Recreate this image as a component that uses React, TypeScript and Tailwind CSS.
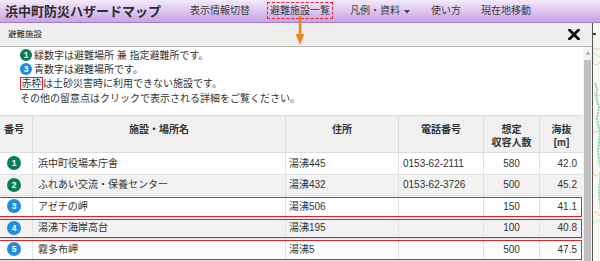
import React from "react";

const font = "font-['Liberation_Sans','Noto_Sans_CJK_JP',sans-serif]";

type Row = {
  no: number;
  color: "green" | "blue";
  name: string;
  addr: string;
  tel: string;
  cap: string;
  alt: string;
  red?: boolean;
};

const rows: Row[] = [
  { no: 1, color: "green", name: "浜中町役場本庁舎", addr: "湯沸445", tel: "0153-62-2111", cap: "580", alt: "42.0" },
  { no: 2, color: "green", name: "ふれあい交流・保養センター", addr: "湯沸432", tel: "0153-62-3726", cap: "500", alt: "45.2" },
  { no: 3, color: "blue", name: "アゼチの岬", addr: "湯沸506", tel: "", cap: "150", alt: "41.1", red: true },
  { no: 4, color: "blue", name: "湯沸下海岸高台", addr: "湯沸195", tel: "", cap: "100", alt: "40.8", red: true },
  { no: 5, color: "blue", name: "霧多布岬", addr: "湯沸5", tel: "", cap: "500", alt: "47.5", red: true },
];

const Badge = ({ n, color, size }: { n: number; color: "green" | "blue"; size: string }) => (
  <span
    className={`${size} ${color === "green" ? "bg-[#0b7d56]" : "bg-[#1f8de0]"} inline-flex shrink-0 items-center justify-center rounded-full text-[8.5px] font-bold leading-none text-white`}
  >
    {n}
  </span>
);

const navItems = ["表示情報切替", "避難施設一覧", "凡例・資料", "使い方", "現在地移動"];

export default function App() {
  return (
    <div className={`${font} relative h-[261px] w-[600px] overflow-hidden bg-white text-[#333]`}>
      {/* top bar */}
      <header className="flex h-[23px] items-center border-b border-[#a67dc7] bg-gradient-to-b from-[#f3eafa] to-[#c9a3e4] pl-[5px]">
        <h1 className="text-[13px] font-bold leading-none text-[#2c2c2c]">浜中町防災ハザードマップ</h1>
        <nav className="ml-[29px] flex items-center gap-[20px] text-[10px] leading-none text-[#3a3a3a]">
          {navItems.map((item) => (
            <span key={item} className="relative flex items-center">
              {item}
              {item === "凡例・資料" && (
                <svg width="8" height="5" viewBox="0 0 8 5" className="ml-[3px]">
                  <path d="M1 1h6L4 4.5z" fill="#444" />
                </svg>
              )}
              {item === "避難施設一覧" && (
                <span className="absolute -left-[3px] -right-[3px] -top-[4px] -bottom-[3px] border-[1.5px] border-dashed border-[#e5202a]" />
              )}
            </span>
          ))}
        </nav>
      </header>

      {/* orange arrow from the menu to the dialog */}
      <svg className="absolute left-[294px] top-[16px]" width="12" height="31" viewBox="0 0 12 31">
        <rect x="4.8" y="0" width="2.6" height="19" fill="#ef8420" />
        <path d="M1.5 18h9L6 29z" fill="#ef8420" />
      </svg>

      <div className="flex h-[238px]">
        {/* dialog */}
        <div className="flex w-[593px] flex-col border-r border-[#555]">
          <div className="flex h-[24px] shrink-0 items-center justify-between border-b border-[#b4b4b4] bg-[#efefef] pl-[8px] pr-[12px]">
            <span className="text-[8.5px] leading-none text-[#222]">避難施設</span>
            <svg width="12" height="11" viewBox="0 0 12 11">
              <path d="M1.5 1l9 9M10.5 1l-9 9" stroke="#111" strokeWidth="2.8" strokeLinecap="square" />
            </svg>
          </div>

          <div className="flex min-h-0 flex-1">
            <div className="min-w-0 flex-1 overflow-hidden">
              {/* legend */}
              <div className="pl-[20px] pt-[1px] text-[10px] text-[#333]">
                <div className="flex h-[14px] items-center gap-[2px]">
                  <Badge n={1} color="green" size="h-[12px] w-[12px]" />
                  <span>緑数字は避難場所 兼 指定避難所です。</span>
                </div>
                <div className="flex h-[14px] items-center gap-[2px]">
                  <Badge n={3} color="blue" size="h-[12px] w-[12px]" />
                  <span>青数字は避難場所です。</span>
                </div>
                <div className="flex h-[15px] items-center">
                  <span className="border-[1.5px] border-[#e5202a] px-[0.5px] leading-[11px]">赤枠</span>
                  <span>は土砂災害時に利用できない施設です。</span>
                </div>
                <div className="flex h-[14px] items-center">その他の留意点はクリックで表示される詳細をご覧ください。</div>
              </div>

              {/* table */}
              <div className="-ml-[3px] mt-[10px] w-[586px] text-[10px]">
                <div className="grid h-[38px] grid-cols-[35px_253px_113px_85px_56px_44px] border-y border-[#dcdcdc] bg-[#f0f0f0] font-bold leading-[13px] text-[#333]">
                  <div className="pl-[7px] pt-[7px]">番号</div>
                  <div className="border-l border-[#dcdcdc] pt-[7px] text-center">施設・場所名</div>
                  <div className="border-l border-[#dcdcdc] pt-[7px] text-center">住所</div>
                  <div className="border-l border-[#dcdcdc] pt-[7px] text-center">電話番号</div>
                  <div className="border-l border-[#dcdcdc] pt-[7px] text-center">想定<br />収容人数</div>
                  <div className="border-l border-[#dcdcdc] pt-[7px] text-center">海抜<br />[m]</div>
                </div>
                {rows.map((r, i) => (
                  <div
                    key={r.no}
                    className={`grid h-[21.5px] grid-cols-[35px_253px_113px_85px_56px_44px] border-b border-[#e2e2e2] ${
                      i % 2 === 1 ? "bg-[#f2f2f2]" : "bg-white"
                    } ${r.red ? "outline outline-[1.5px] -outline-offset-[2.5px] outline-[#e5202a]" : ""}`}
                  >
                    <div className="flex items-center pl-[10px]">
                      <Badge n={r.no} color={r.color} size="h-[14px] w-[14px]" />
                    </div>
                    <div className="flex items-center border-l border-[#e2e2e2] pl-[5px]">{r.name}</div>
                    <div className="flex items-center border-l border-[#e2e2e2] pl-[3px]">{r.addr}</div>
                    <div className="flex items-center border-l border-[#e2e2e2] pl-[4px]">{r.tel}</div>
                    <div className="flex items-center justify-center border-l border-[#e2e2e2]">{r.cap}</div>
                    <div className="flex items-center justify-end border-l border-[#e2e2e2] pr-[6px]">{r.alt}</div>
                  </div>
                ))}
              </div>
            </div>

            {/* scrollbar */}
            <div className="flex w-[9px] shrink-0 flex-col items-center bg-[#f1f1f1]">
              <svg width="6" height="4" viewBox="0 0 6 4" className="mt-[4px]">
                <path d="M0.5 3.5h5L3 0.5z" fill="#a3a3a3" />
              </svg>
              <div className="mt-[5px] w-[7px] flex-1 bg-[#c1c1c1]" />
            </div>
          </div>
        </div>

        {/* map strip */}
        <div className="flex-1 bg-[#f7f8f2]">
          <svg width="7" height="238" viewBox="0 0 7 238">
            <rect x="0" y="10" width="3" height="2" fill="#5b2a8a" />
            <path d="M0 25q4 3 7 0M0 40q5 4 7 -2M1 70q3 5 6 2M0 110q4 -4 7 2M0 150q3 6 7 0M1 190q4 -3 6 3" stroke="#f0c27a" strokeWidth="0.8" fill="none" />
            <path d="M2 60l2 6l-1 8l3 10l-2 12l3 14l-2 20l3 16l-2 24l2 18" stroke="#7dd9a8" strokeWidth="2" strokeDasharray="2 1" fill="none" />
            <path d="M0 30l7 4M0 200l7 -3" stroke="#a8e6c9" strokeWidth="0.8" fill="none" />
          </svg>
        </div>
      </div>
    </div>
  );
}
